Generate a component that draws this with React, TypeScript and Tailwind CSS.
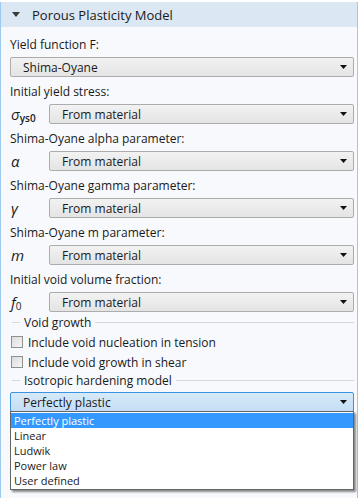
import React from 'react'

const FONT = "font-['Open_Sans',sans-serif]"

function Arrow() {
  return (
    <svg width="7" height="4" viewBox="0 0 7 4" className="shrink-0">
      <path d="M0 0H7L3.5 4Z" fill="#111" />
    </svg>
  )
}

function Select({ value, open = false }: { value: string; open?: boolean }) {
  return (
    <div
      className={`flex h-[20px] flex-1 items-center justify-between rounded-[2px] border pl-[12px] pr-[6px] text-[12px] leading-[15px] text-[#1a1a1a] ${
        open
          ? 'border-[#3c93e0] bg-gradient-to-b from-[#d6eaf9] to-[#c4def5]'
          : 'border-[#acacac] bg-gradient-to-b from-[#f2f2f2] to-[#e4e4e4]'
      }`}
    >
      <span>{value}</span>
      <Arrow />
    </div>
  )
}

function Label({ text }: { text: string }) {
  return <div className="flex h-[27px] items-center pt-[1px] text-[12px] leading-[15px] text-[#1a1a1a]">{text}</div>
}

function SymRow({ sym, value }: { sym: React.ReactNode; value: string }) {
  return (
    <div className="flex h-[20px] items-center">
      <div className="w-[39px] pl-[1px] text-[15px] italic leading-none text-[#1a1a1a]">{sym}</div>
      <Select value={value} />
    </div>
  )
}

function Section({ title, h }: { title: string; h: string }) {
  return (
    <div className={`flex ${h} items-center text-[12px] leading-[15px] text-[#1a1a1a]`}>
      <div className="ml-[2px] h-px w-[8px] bg-[#d3d9df]" />
      <span className="px-[4px]">{title}</span>
      <div className="h-px flex-1 bg-[#d3d9df]" />
    </div>
  )
}

function Check({ text }: { text: string }) {
  return (
    <div className="flex h-[20px] items-center gap-[5px] pl-[1px] text-[12px] leading-[15px] text-[#1a1a1a]">
      <div className="h-[12px] w-[12px] border border-[#8e8f8f] bg-gradient-to-br from-[#dcdcdc] to-[#f6f6f6]" />
      <span>{text}</span>
    </div>
  )
}

const OPTIONS = ['Perfectly plastic', 'Linear', 'Ludwik', 'Power law', 'User defined']

export default function App() {
  return (
    <div className={`h-[498px] w-[362px] bg-white ${FONT}`}>
      <div className="h-[498px] w-[358px] border-x border-[#9cc9ef] bg-[#f7f9fc]">
        <div className="mt-[2px] flex h-[25px] items-center bg-[#dce7f4] pl-[11px] text-[13px] leading-[16px] text-[#1a1a1a]">
          <svg width="8" height="5" viewBox="0 0 8 5" className="mr-[12px]">
            <path d="M0 0H8L4 5Z" fill="#3a3a3a" />
          </svg>
          <span>Porous Plasticity Model</span>
        </div>

        <div className="pl-[9px] pr-[3px]">
          <div className="flex h-[30px] items-center pt-[4px] text-[12px] leading-[15px] text-[#1a1a1a]">
            Yield function F:
          </div>
          <div className="flex h-[20px]">
            <Select value="Shima-Oyane" />
          </div>

          <Label text="Initial yield stress:" />
          <SymRow
            sym={
              <span>
                σ<sub className="text-[10px] font-semibold not-italic">ys0</sub>
              </span>
            }
            value="From material"
          />

          <Label text="Shima-Oyane alpha parameter:" />
          <SymRow sym="α" value="From material" />

          <Label text="Shima-Oyane gamma parameter:" />
          <SymRow sym="γ" value="From material" />

          <Label text="Shima-Oyane m parameter:" />
          <SymRow sym="m" value="From material" />

          <Label text="Initial void volume fraction:" />
          <SymRow
            sym={
              <span>
                f<sub className="text-[10px] not-italic">0</sub>
              </span>
            }
            value="From material"
          />

          <Section title="Void growth" h="h-[20px]" />
          <Check text="Include void nucleation in tension" />
          <Check text="Include void growth in shear" />
          <Section title="Isotropic hardening model" h="h-[17px]" />

          <div className="relative mt-[3px]">
            <div className="flex h-[20px]">
              <Select value="Perfectly plastic" open />
            </div>
            <div className="absolute left-0 right-0 top-[19px] border border-[#646464] bg-white py-px shadow-[2px_2px_2px_rgba(0,0,0,0.45)]">
              {OPTIONS.map((o, i) => (
                <div
                  key={o}
                  className={`flex h-[15px] items-center pl-[3px] text-[11px] leading-[14px] ${
                    i === 0 ? 'bg-[#3399ff] text-white' : 'text-[#1a1a1a]'
                  }`}
                >
                  {o}
                </div>
              ))}
            </div>
          </div>
        </div>
      </div>
    </div>
  )
}
